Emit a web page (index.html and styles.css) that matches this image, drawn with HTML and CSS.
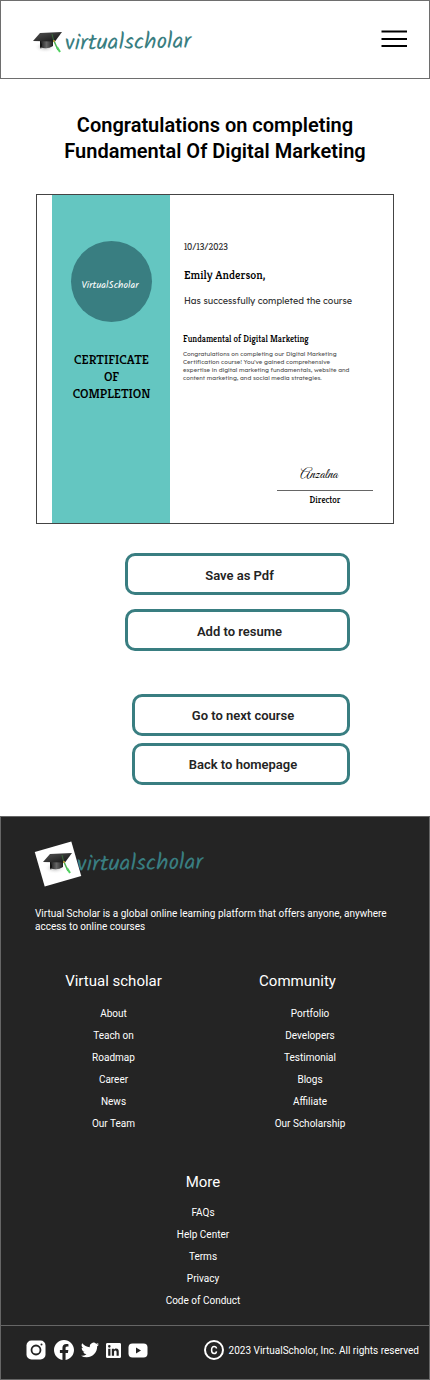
FILE: index.html
```html
<!DOCTYPE html>
<html lang="en">
<head>
<meta charset="utf-8">
<meta name="viewport" content="width=device-width, initial-scale=1">
<title>VirtualScholar – Certificate</title>
<link rel="stylesheet" href="styles.css">
</head>
<body>
<svg class="defs" width="0" height="0" aria-hidden="true">
  <defs>
    <linearGradient id="capBase" x1="0" y1="0" x2="1" y2="0"><stop offset="0" stop-color="#161616"/><stop offset=".5" stop-color="#666"/><stop offset="1" stop-color="#202020"/></linearGradient>
    <linearGradient id="capTop" x1="0" y1="0" x2="1" y2="1"><stop offset="0" stop-color="#555"/><stop offset="1" stop-color="#111"/></linearGradient>
    <radialGradient id="capShade"><stop offset="0" stop-color="#aaa"/><stop offset="1" stop-color="#fff" stop-opacity="0"/></radialGradient>
    <symbol id="cap" viewBox="0 0 30 24">
      <ellipse cx="12" cy="16" rx="11" ry="6" fill="url(#capShade)"/>
      <path d="M7 8v8q7 3 13-1V8z" fill="url(#capBase)"/>
      <path d="M7 9l2 5-1 4-1-2z" fill="#111"/>
      <path d="M7 2l22-1-7 9.500L0 10z" fill="url(#capTop)"/>
      <path d="M19 3l2 8" stroke="#3a6b3c" fill="none"/>
      <path d="M21 10l4 9" stroke="#4caf50" stroke-width="1.500" fill="none"/>
      <path d="M24 16l3 5" stroke="#4fd060" stroke-width="2" fill="none"/>
      <circle cx="21" cy="10" r="1" fill="#c59a35"/>
    </symbol>
  </defs>
</svg>

<header class="header">
  <a class="logo" href="#" aria-label="virtualscholar">
    <svg class="logo-cap" aria-hidden="true"><use href="#cap"/></svg>
    <span class="logo-name">virtualscholar</span>
  </a>
  <button class="menu" type="button" aria-label="Menu">
    <svg width="26" height="18" viewBox="0 0 26 18"><path d="M.500 1.500H26M.500 9H26M.500 16H26" stroke="#000" stroke-width="2"/></svg>
  </button>
</header>

<main class="main">
  <h1 class="title">Congratulations on completing Fundamental Of Digital Marketing</h1>

  <section class="certificate" aria-label="Certificate">
    <div class="cert-band">
      <div class="cert-seal">VirtualScholar</div>
      <h2 class="cert-heading">CERTIFICATE<br>OF<br>COMPLETION</h2>
    </div>
    <div class="cert-body">
      <p class="cert-date">10/13/2023</p>
      <p class="cert-name">Emily Anderson,</p>
      <p class="cert-line">Has successfully completed the course</p>
      <h3 class="cert-course">Fundamental of Digital Marketing</h3>
      <p class="cert-text">Congratulations on completing our Digital Marketing<br>Certification course! You've gained comprehensive<br>expertise in digital marketing fundamentals, website and<br>content marketing, and social media strategies.</p>
      <div class="cert-sign">
        <p class="cert-signature">Anzalna</p>
        <p class="cert-role">Director</p>
      </div>
    </div>
  </section>

  <div class="actions">
    <button class="action" type="button">Save as Pdf</button>
    <button class="action" type="button">Add to resume</button>
  </div>
  <div class="actions actions-next">
    <button class="action" type="button">Go to next course</button>
    <button class="action" type="button">Back to homepage</button>
  </div>
</main>

<footer class="footer">
  <div class="footer-top">
    <a class="logo logo-footer" href="#" aria-label="virtualscholar">
      <span class="logo-tile"><svg class="logo-cap" aria-hidden="true"><use href="#cap"/></svg></span>
      <span class="logo-name">virtualscholar</span>
    </a>
    <p class="tagline">Virtual Scholar is a global online learning platform that offers anyone, anywhere access to online courses</p>
  </div>
  <div class="columns">
    <nav class="column" aria-label="Virtual scholar">
      <h2>Virtual scholar</h2>
      <ul>
        <li><a href="#">About</a></li>
        <li><a href="#">Teach on</a></li>
        <li><a href="#">Roadmap</a></li>
        <li><a href="#">Career</a></li>
        <li><a href="#">News</a></li>
        <li><a href="#">Our Team</a></li>
      </ul>
    </nav>
    <nav class="column column-community" aria-label="Community">
      <h2>Community</h2>
      <ul>
        <li><a href="#">Portfolio</a></li>
        <li><a href="#">Developers</a></li>
        <li><a href="#">Testimonial</a></li>
        <li><a href="#">Blogs</a></li>
        <li><a href="#">Affiliate</a></li>
        <li><a href="#">Our Scholarship</a></li>
      </ul>
    </nav>
  </div>
  <nav class="column column-more" aria-label="More">
    <h2>More</h2>
    <ul>
      <li><a href="#">FAQs</a></li>
      <li><a href="#">Help Center</a></li>
      <li><a href="#">Terms</a></li>
      <li><a href="#">Privacy</a></li>
      <li><a href="#">Code of Conduct</a></li>
    </ul>
  </nav>
  <div class="bottom">
    <div class="social">
      <a href="#" aria-label="Instagram"><svg width="20" height="20" viewBox="0 0 20 20"><rect x=".5" y=".5" width="19" height="19" rx="5" fill="#fff"/><circle cx="10" cy="10" r="4.500" fill="none" stroke="#242424" stroke-width="1.800"/><circle cx="15.500" cy="4.500" r="1" fill="#242424"/></svg></a>
      <a href="#" aria-label="Facebook"><svg width="20" height="20" viewBox="0 0 24 24"><path fill="#fff" d="M24 12.070C24 5.400 18.630 0 12 0S0 5.400 0 12.070C0 18.100 4.390 23.090 10.130 24v-8.440H7.080v-3.490h3.050V9.410c0-3.020 1.790-4.690 4.530-4.690 1.310 0 2.690.24 2.690.24v2.970h-1.510c-1.500 0-1.960.93-1.960 1.890v2.260h3.330l-.53 3.490h-2.800V24C19.610 23.090 24 18.100 24 12.070z"/></svg></a>
      <a href="#" aria-label="Twitter"><svg width="18" height="18" viewBox="0 0 24 24"><path fill="#fff" d="M23.950 4.570a10 10 0 0 1-2.820.77 4.960 4.960 0 0 0 2.160-2.720 9.900 9.900 0 0 1-3.120 1.190 4.920 4.920 0 0 0-8.380 4.480C7.690 8.100 4.070 6.130 1.640 3.160a4.920 4.920 0 0 0 1.520 6.570 4.900 4.900 0 0 1-2.230-.61v.06a4.920 4.920 0 0 0 3.950 4.830 5 5 0 0 1-2.210.08 4.940 4.940 0 0 0 4.600 3.420A9.870 9.870 0 0 1 0 19.540a13.990 13.990 0 0 0 7.550 2.210c9.050 0 14-7.500 14-13.980 0-.21 0-.42-.02-.63a9.940 9.940 0 0 0 2.420-2.570z"/></svg></a>
      <a href="#" aria-label="LinkedIn"><svg width="15" height="15" viewBox="0 0 24 24"><path fill="#fff" d="M22 0H2C1 0 0 1 0 2v20c0 1 1 2 2 2h20c1 0 2-1 2-2V2c0-1-1-2-2-2zM7.100 20.400H3.500V9h3.600zM5.300 7.400a2 2 0 1 1 0-4.100 2 2 0 0 1 0 4.100zM20.400 20.400h-3.500v-5.600c0-1.300 0-3-1.900-3s-2.100 1.400-2.100 2.900v5.700H9.300V9h3.400v1.600c.5-.9 1.600-1.900 3.400-1.900 3.600 0 4.300 2.400 4.300 5.500z"/></svg></a>
      <a href="#" aria-label="YouTube"><svg width="20" height="15" viewBox="0 0 20 15"><rect x=".5" y=".5" width="19" height="14" rx="4" fill="#fff"/><path d="M8 4.500v6l5-3z" fill="#242424"/></svg></a>
    </div>
    <p class="copyright"><svg width="20" height="20" viewBox="0 0 20 20" aria-hidden="true"><circle cx="10" cy="10" r="9" fill="none" stroke="#fff" stroke-width="2"/><path d="M12.500 8.500C12.300 7 11.300 6.400 10.100 6.400 8.500 6.400 7.600 7.800 7.600 10s.9 3.600 2.500 3.600c1.200 0 2.200-.7 2.400-2.200" fill="none" stroke="#fff" stroke-width="1.500"/></svg><span>2023 VirtualScholor, Inc. All rights reserved</span></p>
  </div>
</footer>
</body>
</html>
```
FILE: styles.css
```css
* { box-sizing: border-box; }
body {
  margin: 0;
  background: #fff;
  color: #000;
  font-family: Roboto, "Liberation Sans", sans-serif;
}
h1, h2, h3, p, ul { margin: 0; padding: 0; }
ul { list-style: none; }
a { color: inherit; text-decoration: none; }
svg { display: block; }
button { margin: 0; font-family: inherit; cursor: pointer; }
.defs { position: absolute; }

.header {
  display: flex;
  align-items: center;
  justify-content: space-between;
  height: 79px;
  padding: 0 22px 2px 32px;
  border: 1px solid #6e6e6e;
}
.logo { display: flex; align-items: center; }
.logo-cap { width: 30px; height: 24px; }
.logo-name {
  margin-left: 2px;
  color: #397e81;
  font: 23px/24px "Segoe Script", Kalam, Lato, cursive;
  transform: rotate(-1deg);
}
.header .logo { padding-top: 8px; }
.menu { padding: 0; border: 0; background: none; }

.title {
  padding: 33px 60px 0;
  font-size: 20px;
  font-weight: 600;
  line-height: 26px;
  text-align: center;
}

.certificate {
  display: flex;
  min-height: 330px;
  margin: 30px 36px 0;
  padding-left: 15px;
  border: 1px solid #444;
}
.cert-band {
  flex: 0 0 118px;
  padding: 46px 0 0 19px;
  background: #64c6c1;
}
.cert-seal {
  display: flex;
  align-items: center;
  justify-content: center;
  width: 81px;
  height: 81px;
  padding: 6px 3px 0 0;
  border-radius: 50%;
  background: #397e81;
  color: #fff;
  font: 10px/12px "Segoe Script", Kalam, Lato, cursive;
}
.cert-heading {
  width: 81px;
  margin-top: 29px;
  font: 500 13px/17px "Kreon", "Liberation Serif", serif;
  text-align: center;
}
.cert-body {
  display: flex;
  flex: 1;
  flex-direction: column;
  padding: 46px 20px 16px 13px;
  font-family: "Lexend", "Open Sans", sans-serif;
}
.cert-date { color: #333; font: 400 9px/12px "Kreon", "Liberation Serif", serif; }
.cert-name { margin-top: 14px; font: 500 12px/16px "Kreon", "Liberation Serif", serif; }
.cert-line { margin-top: 12px; color: #333; font-size: 9px; line-height: 12px; white-space: nowrap; }
.cert-course { margin-top: 25px; font: 500 9px/14px "Kreon", "Liberation Serif", serif; white-space: nowrap; }
.cert-text { margin-top: 4px; color: #555; font-size: 6px; line-height: 8px; white-space: nowrap; }
.cert-date, .cert-name, .cert-line { padding-left: 1px; }
.cert-sign { width: 96px; margin-top: auto; margin-left: auto; text-align: center; }
.cert-signature {
  padding: 0 12px 6px 0;
  border-bottom: 1px solid #666;
  font: 14px/18px "Great Vibes", "Liberation Serif", serif;
}
.cert-role { padding-top: 3px; font: 500 9px/13px "Kreon", "Liberation Serif", serif; }

.actions {
  display: flex;
  flex-direction: column;
  gap: 14px;
  margin: 29px 80px 0 125px;
}
.actions-next { gap: 7px; margin: 43px 80px 0 132px; }
.action {
  height: 42px;
  padding: 3px 0 0 4px;
  border: 3px solid #397e81;
  border-radius: 10px;
  background: #fff;
  color: #242424;
  font-size: 13px;
  font-weight: 600;
  line-height: 16px;
}
.actions-next .action { padding-top: 2px; }

.footer {
  margin-top: 31px;
  border: 1px solid #666;
  background: #242424;
  color: #fff;
  font-size: 10px;
  line-height: 13px;
}
.footer-top { padding: 25px 34px 0; }
.logo-tile {
  display: flex;
  align-items: center;
  justify-content: center;
  width: 38px;
  height: 36px;
  margin: 4px;
  background: #fff;
  transform: rotate(-16deg);
}
.logo-tile .logo-cap { flex: none; transform: rotate(16deg); }
.logo-footer .logo-name { margin-left: -4px; }
.tagline { margin-top: 21px; }
.columns {
  display: grid;
  grid-template-columns: 225fr 203fr;
  margin-top: 38px;
}
.column { text-align: center; }
.column h2 {
  font-size: 15px;
  font-weight: 400;
  line-height: 20px;
}
.column ul { display: grid; gap: 9px; margin-top: 16px; }
.column-community h2 { padding-right: 60px; }
.column-community ul { padding-right: 35px; }
.column-more { margin: 42px 24px 0 0; }
.column-more ul { margin-top: 14px; }
.bottom {
  display: flex;
  align-items: center;
  justify-content: space-between;
  margin-top: 18px;
  padding: 14px 10px 19px 25px;
  border-top: 1px solid #666;
}
.social { display: flex; align-items: center; gap: 8px; }
.social a:nth-child(n+3) { margin-left: -1px; }
.copyright { display: flex; align-items: center; gap: 5px; }
```
